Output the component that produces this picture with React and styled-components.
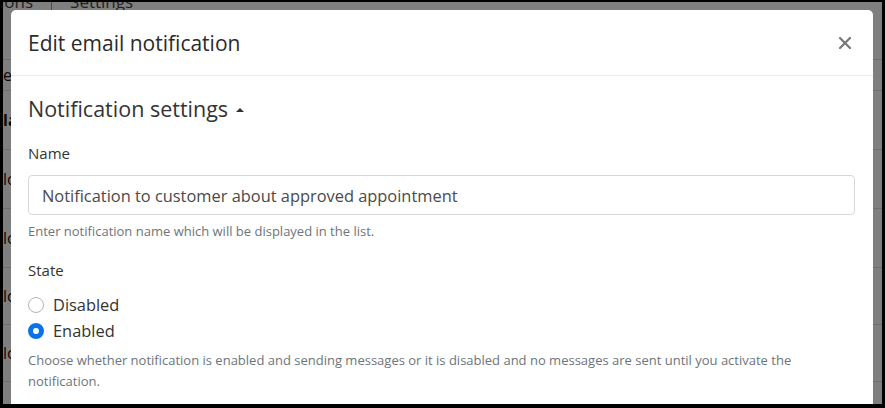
import React from 'react';
import styled, { createGlobalStyle } from 'styled-components';

const GlobalStyle = createGlobalStyle`
  html, body {
    margin: 0;
    padding: 0;
    background: #000;
  }
  body {
    font-family: "Open Sans", "Noto Sans", sans-serif;
  }
`;

const Frame = styled.div`
  width: 885px;
  height: 408px;
  box-sizing: border-box;
  border-style: solid;
  border-color: #000;
  border-width: 2px 3px 4px 3px;
  overflow: hidden;
`;

const Screen = styled.div`
  position: relative;
  height: 100%;
  background: #fff;
  overflow: hidden;
`;

const PageBehind = styled.div`
  position: absolute;
  inset: 0;
  font-family: "Open Sans", sans-serif;
  color: #333;
`;

const Tabs = styled.div`
  display: flex;
  gap: 18px;
  margin: -12px 0 0 -70px;
  font-size: 17px;
  color: #444;

  span + span {
    border-left: 1px solid #999;
    padding-left: 18px;
  }
`;

const TableRow = styled.div`
  height: ${(p) => p.h}px;
  border-bottom: 1px solid #ddd;
  display: flex;
  align-items: center;
  font-size: 16px;
  font-weight: ${(p) => (p.bold ? 700 : 400)};
  color: #111;
`;

const Backdrop = styled.div`
  position: absolute;
  inset: 0;
  background: rgba(0, 0, 0, 0.5);
  padding: 8px 9px 0 8px;
`;

const Modal = styled.div`
  background: #fff;
  border-radius: 5px 5px 0 0;
  height: 420px;
  color: #333;
`;

const Header = styled.div`
  height: 66px;
  box-sizing: border-box;
  border-bottom: 1px solid #e9ecef;
  display: flex;
  align-items: center;
  justify-content: space-between;
  padding: 0 20px 0 17px;
`;

const Title = styled.h5`
  margin: 0;
  font-size: 21px;
  font-weight: 500;
  color: #2b2b2b;
`;

const Close = styled.button`
  border: 0;
  background: none;
  padding: 0;
  width: 16px;
  height: 16px;
  display: flex;
  align-items: center;
  justify-content: center;
  cursor: pointer;
`;

const Body = styled.div`
  padding: 18px 18px 0 17px;
`;

const SectionTitle = styled.h4`
  margin: 0 0 18px;
  font-size: 21.5px;
  font-weight: 400;
  color: #333;
  display: flex;
  align-items: center;
  gap: 8px;
  line-height: 30px;
`;

const Caret = styled.span`
  width: 0;
  height: 0;
  border-left: 4px solid transparent;
  border-right: 4px solid transparent;
  border-bottom: 4px solid #333;
  margin-top: 2px;
`;

const Field = styled.div`
  margin-bottom: 17px;
`;

const Label = styled.div`
  font-size: 15px;
  line-height: 22px;
  color: #333;
  margin-bottom: ${(p) => p.mb || 11}px;
`;

const Input = styled.input`
  display: block;
  width: 100%;
  box-sizing: border-box;
  height: 40px;
  border: 1px solid #d6d9dc;
  border-radius: 4px;
  padding: 0 13px;
  font-family: inherit;
  font-size: 16.4px;
  color: #4a4a4a;
  outline: none;
`;

const Help = styled.div`
  font-size: 13px;
  line-height: 21px;
  color: #6c757d;
  margin-top: ${(p) => p.mt || 6}px;
`;

const RadioList = styled.div`
  display: flex;
  flex-direction: column;
  gap: 4px;
`;

const RadioRow = styled.label`
  display: flex;
  align-items: center;
  gap: 9px;
  font-size: 16.4px;
  line-height: 22px;
  color: #333;
`;

const RadioDot = styled.span`
  width: 16px;
  height: 16px;
  box-sizing: border-box;
  border-radius: 50%;
  border: ${(p) => (p.checked ? '5px solid #0a74e6' : '1px solid #b5b5b5')};
  background: #fff;
`;

export default function App() {
  return (
    <>
      <GlobalStyle />
      <Frame>
        <Screen>
          <PageBehind>
            <Tabs>
              <span>Notifications</span>
              <span>Settings</span>
            </Tabs>
            <TableRow h={46} />
            <TableRow h={30}>e</TableRow>
            <TableRow h={58} bold>la</TableRow>
            <TableRow h={58}>lo</TableRow>
            <TableRow h={58}>lo</TableRow>
            <TableRow h={56}>lo</TableRow>
            <TableRow h={56}>lo</TableRow>
          </PageBehind>
          <Backdrop>
            <Modal>
              <Header>
                <Title>Edit email notification</Title>
                <Close aria-label="Close">
                  <svg width="12" height="12" viewBox="0 0 12 12">
                    <path d="M1 1 L11 11 M11 1 L1 11" stroke="#777" strokeWidth="2.2" strokeLinecap="square" />
                  </svg>
                </Close>
              </Header>
              <Body>
                <SectionTitle>
                  Notification settings <Caret />
                </SectionTitle>
                <Field>
                  <Label>Name</Label>
                  <Input defaultValue="Notification to customer about approved appointment" />
                  <Help>Enter notification name which will be displayed in the list.</Help>
                </Field>
                <Field>
                  <Label mb={13}>State</Label>
                  <RadioList>
                    <RadioRow>
                      <RadioDot />
                      Disabled
                    </RadioRow>
                    <RadioRow>
                      <RadioDot checked />
                      Enabled
                    </RadioRow>
                  </RadioList>
                  <Help mt={8}>
                    Choose whether notification is enabled and sending messages or it is disabled and no messages are sent until you activate the notification.
                  </Help>
                </Field>
              </Body>
            </Modal>
          </Backdrop>
        </Screen>
      </Frame>
    </>
  );
}
